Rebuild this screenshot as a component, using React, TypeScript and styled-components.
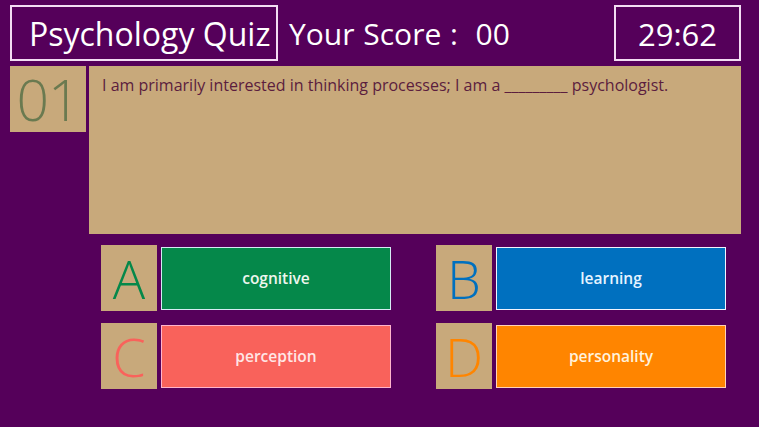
import styled, { createGlobalStyle } from 'styled-components';

const GlobalStyle = createGlobalStyle`
  html, body {
    margin: 0;
    padding: 0;
    background: #55005a;
  }
  body {
    font-family: "Open Sans", "Noto Sans", sans-serif;
  }
`;

const Page = styled.div`
  width: 759px;
  height: 427px;
  background: #55005a;
  box-sizing: border-box;
  padding: 5px 18px 0 10px;
  display: flex;
  flex-direction: column;
  overflow: hidden;
`;

const Header = styled.header`
  display: flex;
  align-items: center;
  height: 56px;
`;

const FramedBox = styled.div<{ $width: number; $size: number; $inset?: number }>`
  width: ${({ $width }) => $width}px;
  height: 56px;
  box-sizing: border-box;
  border: 2px solid #f3dcf3;
  color: #ffffff;
  display: flex;
  align-items: center;
  justify-content: ${({ $inset }) => ($inset ? 'flex-start' : 'center')};
  padding-left: ${({ $inset }) => $inset ?? 0}px;
  font-size: ${({ $size }) => $size}px;
  padding-top: 1px;
  white-space: nowrap;
`;

const Score = styled.div`
  flex: 1;
  color: #ffffff;
  font-size: 30px;
  margin-left: 11px;
  padding-top: 1px;
  word-spacing: 1px;
`;

const QuestionRow = styled.section`
  display: flex;
  gap: 3px;
  margin-top: 5px;
`;

const NumberTile = styled.div`
  width: 76px;
  height: 66px;
  background: #c8a97b;
  color: #6a7a50;
  font-size: 57px;
  font-weight: 300;
  display: flex;
  align-items: center;
  justify-content: center;
  letter-spacing: -1px;
`;

const QuestionCard = styled.div`
  flex: 1;
  height: 168px;
  background: #c8a97b;
  color: #5b1d3e;
  font-size: 16px;
  padding: 8px 13px;
  box-sizing: border-box;
`;

const Answers = styled.section`
  display: grid;
  grid-template-columns: 290px 290px;
  column-gap: 45px;
  row-gap: 12px;
  margin: 11px 0 0 91px;
`;

const Answer = styled.div`
  display: flex;
  align-items: center;
  gap: 4px;
  height: 66px;
`;

const LetterTile = styled.div<{ $color: string }>`
  width: 56px;
  height: 66px;
  background: #c8a97b;
  color: ${({ $color }) => $color};
  font-size: 54px;
  font-weight: 300;
  display: flex;
  align-items: center;
  justify-content: center;
`;

const AnswerButton = styled.button<{ $bg: string; $edge: string; $ink: string }>`
  width: 230px;
  height: 63px;
  background: ${({ $bg }) => $bg};
  border: 1px solid ${({ $edge }) => $edge};
  color: ${({ $ink }) => $ink};
  font-family: "Open Sans", "Noto Sans", sans-serif;
  font-size: 15.5px;
  font-weight: 600;
  padding: 0;
  cursor: pointer;
`;

const answers = [
  { letter: 'A', text: 'cognitive', color: '#05884a', edge: '#d6ecf4', ink: '#eef6ee' },
  { letter: 'B', text: 'learning', color: '#0070bf', edge: '#f2f4ff', ink: '#e6f4ff' },
  { letter: 'C', text: 'perception', color: '#f9625b', edge: '#ffb4cc', ink: '#ffe6e6' },
  { letter: 'D', text: 'personality', color: '#ff8500', edge: '#ffd2b8', ink: '#fff2dc' },
];

export default function App() {
  return (
    <>
      <GlobalStyle />
      <Page>
        <Header>
          <FramedBox $width={268} $size={32} $inset={17}>Psychology Quiz</FramedBox>
          <Score>Your Score :&nbsp; 00</Score>
          <FramedBox $width={127} $size={31}>29:62</FramedBox>
        </Header>
        <QuestionRow>
          <NumberTile>01</NumberTile>
          <QuestionCard>
            I am primarily interested in thinking processes; I am a _________ psychologist.
          </QuestionCard>
        </QuestionRow>
        <Answers>
          {answers.map((a) => (
            <Answer key={a.letter}>
              <LetterTile $color={a.color}>{a.letter}</LetterTile>
              <AnswerButton $bg={a.color} $edge={a.edge} $ink={a.ink}>
                {a.text}
              </AnswerButton>
            </Answer>
          ))}
        </Answers>
      </Page>
    </>
  );
}
